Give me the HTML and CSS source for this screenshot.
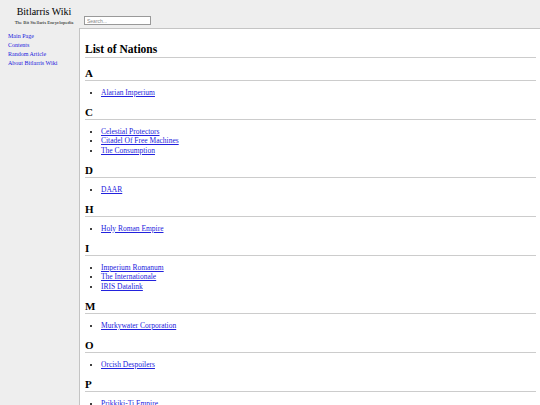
FILE: index.html
```html
<!DOCTYPE html>
<html>
<head>
<meta charset="utf-8">
<title>List of Nations - Bitlarris Wiki</title>
<link rel="stylesheet" href="styles.css">
</head>
<body>
<header class="top">
  <div class="brand">
    <div class="brand-title">Bitlarris Wiki</div>
    <div class="brand-sub">The Bit Stellaris Encyclopedia</div>
  </div>
  <div class="search-wrap"><input class="search" type="text" placeholder="Search..."></div>
</header>
<div class="layout">
  <nav class="side">
    <a href="#">Main Page</a>
    <a href="#">Contents</a>
    <a href="#">Random Article</a>
    <a href="#">About Bitlarris Wiki</a>
  </nav>
  <main class="content">
    <h1>List of Nations</h1>
    <h2>A</h2>
    <ul><li><a href="#">Alarian Imperium</a></li></ul>
    <h2>C</h2>
    <ul>
      <li><a href="#">Celestial Protectors</a></li>
      <li><a href="#">Citadel Of Free Machines</a></li>
      <li><a href="#">The Consumption</a></li>
    </ul>
    <h2>D</h2>
    <ul><li><a href="#">DAAR</a></li></ul>
    <h2>H</h2>
    <ul><li><a href="#">Holy Roman Empire</a></li></ul>
    <h2>I</h2>
    <ul>
      <li><a href="#">Imperium Romanum</a></li>
      <li><a href="#">The Internationale</a></li>
      <li><a href="#">IRIS Datalink</a></li>
    </ul>
    <h2>M</h2>
    <ul><li><a href="#">Murkywater Corporation</a></li></ul>
    <h2>O</h2>
    <ul><li><a href="#">Orcish Despoilers</a></li></ul>
    <h2>P</h2>
    <ul><li><a href="#">Prikkiki-Ti Empire</a></li></ul>
  </main>
</div>
</body>
</html>
```
FILE: styles.css
```css
html, body {
  margin: 0;
  padding: 0;
  background: #eeeeee;
  font-family: "Liberation Serif", "Times New Roman", serif;
  color: #000;
}
.top {
  display: flex;
  height: 29px;
  border-bottom: 1px solid #c4c4c4;
  box-sizing: border-box;
  margin-left: 79px;
}
.brand {
  width: 88px;
  margin-left: -79px;
  text-align: center;
  padding-top: 6px;
}
.brand-title {
  font-size: 10px;
  line-height: 12px;
}
.brand-sub {
  font-size: 4.8px;
  line-height: 6px;
  margin-top: 2px;
}
.search-wrap {
  padding-top: 16px;
  margin-left: -4px;
}
.search {
  display: block;
  width: 67px;
  height: 9px;
  box-sizing: border-box;
  border: 1px solid #999;
  padding: 0 2px;
  font-family: "Liberation Sans", Arial, sans-serif;
  font-size: 5px;
  background: #fff;
  outline: none;
}
.search::placeholder { color: #888; }
.layout {
  display: flex;
  align-items: stretch;
  min-height: 376px;
}
.side {
  width: 79px;
  flex: none;
  padding: 3px 0 0 8px;
  box-sizing: border-box;
  display: flex;
  flex-direction: column;
}
.side a {
  font-size: 6px;
  line-height: 9px;
  color: #2222dd;
  text-decoration: none;
  white-space: nowrap;
}
.content {
  flex: 1;
  background: #fff;
  border-left: 1px solid #c4c4c4;
  padding: 13px 4px 20px 5px;
}
h1 {
  font-size: 11.5px;
  line-height: 14px;
  margin: 0;
  padding-bottom: 1px;
  border-bottom: 1px solid #cccccc;
}
h2 {
  font-size: 11px;
  line-height: 13px;
  margin: 9px 0 0;
  padding-bottom: 0;
  border-bottom: 1px solid #cccccc;
}
ul {
  margin: 6.5px 0 0;
  padding-left: 16px;
}
li {
  font-size: 7.5px;
  line-height: 9.5px;
}
li a { color: #2222dd; }
```
